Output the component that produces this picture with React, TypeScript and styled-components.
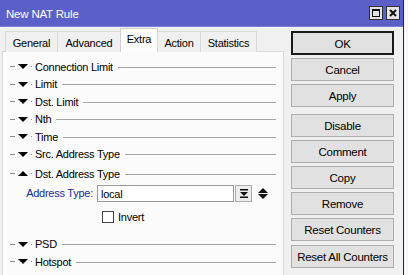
import React from 'react';
import styled, {createGlobalStyle, css} from 'styled-components';

const GlobalStyle = createGlobalStyle`
  html, body {
    margin: 0;
    padding: 0;
    overflow: hidden;
    background: #f4f4f6;
  }
  body {
    font-family: "Liberation Sans", Arial, sans-serif;
    font-size: 11px;
    letter-spacing: -0.25px;
    color: #000;
  }
`;

const Screen = styled.div`
  width: 408px;
  height: 275px;
  overflow: hidden;
  display: flex;
`;
const Window = styled.div`
  width: 403px;
  height: 100%;
  display: flex;
  flex-direction: column;
  background: #f0f0f0;
  border-right: 1px solid #2a2a2a;
`;
const Filler = styled.div`
  flex: 1;
  background: #f7f7f9;
`;
const TitleBar = styled.div`
  height: 26px;
  flex-shrink: 0;
  background: #5b5fc8;
  display: flex;
  align-items: center;
  padding: 0 3px 0 6px;
  color: #fff;
  font-size: 11.5px;
  letter-spacing: -0.2px;
  border-bottom: 1px solid #7c7fd3;
`;
const Title = styled.div`
  flex: 1;
  padding-top: 1px;
`;
const TitleButton = styled.div`
  width: 12px;
  height: 12px;
  margin-left: 3px;
  background: #e4e4e8;
  border: 1px solid #303030;
  display: flex;
  align-items: center;
  justify-content: center;
`;
const Body = styled.div`
  flex: 1;
  display: flex;
  min-height: 0;
`;
const TabArea = styled.div`
  width: 282px;
  margin-left: 2px;
  display: flex;
  flex-direction: column;
  padding-top: 2px;
`;
const TabStrip = styled.div`
  display: flex;
  align-items: flex-end;
  height: 23px;
  padding-left: 3px;
  position: relative;
  z-index: 1;
  margin-bottom: -1px;
`;
const Tab = styled.div<{$active?: boolean; $w: number}>`
  width: ${p => p.$w}px;
  height: 21px;
  box-sizing: border-box;
  border: 1px solid #d9d9d9;
  border-bottom: none;
  margin-right: -1px;
  background: #f0f0f0;
  display: flex;
  align-items: center;
  justify-content: center;
  padding-top: 2px;
  ${p => p.$active && css`
    height: 24px;
    background: #fdfdfd;
    padding-top: 0;
    padding-bottom: 3px;
    border-color: #d0d0d0;
  `}
`;
const Panel = styled.div`
  flex: 1;
  background: #fbfbfb;
  border: 1px solid #d9d9d9;
  border-bottom: none;
  padding-top: 6px;
  overflow: hidden;
`;
const SectionRow = styled.div<{$gap?: number}>`
  height: 17.5px;
  display: flex;
  align-items: center;
  margin-top: ${p => p.$gap || 0}px;
`;
const Dash = styled.div`
  width: 5px;
  height: 1px;
  margin-left: 7px;
  background: #8a8a8a;
`;
const Arrow = styled.div<{$up?: boolean}>`
  width: 0;
  height: 0;
  margin-left: 3px;
  border-left: 5px solid transparent;
  border-right: 5px solid transparent;
  ${p => p.$up
    ? css`border-bottom: 5px solid #000;`
    : css`border-top: 5px solid #000;`}
`;
const Dot = styled.div`
  width: 1px;
  height: 1px;
  margin-left: 3px;
  background: #8a8a8a;
`;
const SectionName = styled.div`
  margin-left: 3px;
  white-space: nowrap;
`;
const Rule = styled.div`
  flex: 1;
  height: 1px;
  margin: 1px 7px 0 5px;
  background: #a6a6a6;
`;
const FieldRow = styled.div<{$gap: number}>`
  display: flex;
  align-items: center;
  margin-top: ${p => p.$gap}px;
  height: 17px;
`;
const FieldLabel = styled.div`
  width: 94px;
  text-align: right;
  color: #1c2a9c;
  padding-right: 4px;
  box-sizing: border-box;
`;
const Input = styled.div`
  width: 137px;
  height: 17px;
  box-sizing: border-box;
  border: 1px solid #9a9a9a;
  background: #fff;
  padding: 1px 0 0 3px;
  display: flex;
  align-items: center;
`;
const DropButton = styled.div`
  width: 17px;
  height: 17px;
  margin-left: 1px;
  box-sizing: border-box;
  border: 1px solid #adadad;
  background: #ececec;
  display: flex;
  align-items: center;
  justify-content: center;
`;
const Spinner = styled.div`
  margin-left: 6px;
  display: flex;
  flex-direction: column;
  gap: 1px;
`;
const Checkbox = styled.div`
  width: 12px;
  height: 12px;
  box-sizing: border-box;
  margin-left: 99px;
  border: 1px solid #444;
  background: #fff;
`;
const CheckLabel = styled.div`
  margin-left: 4px;
`;
const ButtonColumn = styled.div`
  width: 103px;
  margin-left: 7px;
  padding-top: 4px;
  display: flex;
  flex-direction: column;
  gap: 3.2px;
`;
const Button = styled.div<{$primary?: boolean; $space?: number}>`
  height: 23px;
  box-sizing: border-box;
  border: 1px solid #adadad;
  background: #e1e1e1;
  display: flex;
  align-items: center;
  justify-content: center;
  padding-top: 1px;
  font-size: 11.5px;
  margin-top: ${p => p.$space || 0}px;
  ${p => p.$primary && css`
    height: 24px;
    border: 2px solid #1a1a1a;
  `}
`;

const sections = ['Connection Limit', 'Limit', 'Dst. Limit', 'Nth', 'Time', 'Src. Address Type'];
const later = ['PSD', 'Hotspot', 'IP Fragment'];
const buttons = ['Cancel', 'Apply', 'Disable', 'Comment', 'Copy', 'Remove', 'Reset Counters', 'Reset All Counters'];
const tabs = [
  {name: 'General', w: 53},
  {name: 'Advanced', w: 64},
  {name: 'Extra', w: 38},
  {name: 'Action', w: 44},
  {name: 'Statistics', w: 57},
];

function Section({name, up, gap}: {name: string; up?: boolean; gap?: number}) {
  return (
    <SectionRow $gap={gap}>
      <Dash />
      <Arrow $up={up} />
      <Dot />
      <SectionName>{name}</SectionName>
      <Rule />
    </SectionRow>
  );
}

export default function App() {
  return (
    <Screen>
      <GlobalStyle />
      <Window>
        <TitleBar>
          <Title>New NAT Rule</Title>
          <TitleButton>
            <svg width="8" height="8" viewBox="0 0 8 8">
              <rect x="0.5" y="0.5" width="7" height="7" fill="none" stroke="#111" />
              <rect x="0" y="0" width="8" height="2" fill="#111" />
            </svg>
          </TitleButton>
          <TitleButton>
            <svg width="8" height="8" viewBox="0 0 8 8">
              <path d="M1 1 L7 7 M7 1 L1 7" stroke="#111" strokeWidth="2" />
            </svg>
          </TitleButton>
        </TitleBar>
        <Body>
          <TabArea>
            <TabStrip>
              {tabs.map(t => (
                <Tab key={t.name} $w={t.w} $active={t.name === 'Extra'}>{t.name}</Tab>
              ))}
            </TabStrip>
            <Panel>
              {sections.map(s => <Section key={s} name={s} />)}
              <Section name="Dst. Address Type" up gap={2} />
              <FieldRow $gap={2}>
                <FieldLabel>Address Type:</FieldLabel>
                <Input>local</Input>
                <DropButton>
                  <svg width="8" height="9" viewBox="0 0 8 9">
                    <rect x="0" y="0" width="8" height="1.5" fill="#111" />
                    <path d="M0 3 L8 3 L4 7 Z" fill="#111" />
                    <rect x="0" y="7.5" width="8" height="1.5" fill="#111" />
                  </svg>
                </DropButton>
                <Spinner>
                  <svg width="10" height="5" viewBox="0 0 10 5"><path d="M0 5 L5 0 L10 5 Z" fill="#111" /></svg>
                  <svg width="10" height="5" viewBox="0 0 10 5"><path d="M0 0 L10 0 L5 5 Z" fill="#111" /></svg>
                </Spinner>
              </FieldRow>
              <FieldRow $gap={7}>
                <Checkbox />
                <CheckLabel>Invert</CheckLabel>
              </FieldRow>
              {later.map((s, i) => <Section key={s} name={s} gap={i === 0 ? 10 : 0} />)}
            </Panel>
          </TabArea>
          <ButtonColumn>
            <Button $primary>OK</Button>
            {buttons.map(b => (
              <Button key={b} $space={b === 'Disable' ? 3 : 0}>{b}</Button>
            ))}
          </ButtonColumn>
        </Body>
      </Window>
      <Filler />
    </Screen>
  );
}
